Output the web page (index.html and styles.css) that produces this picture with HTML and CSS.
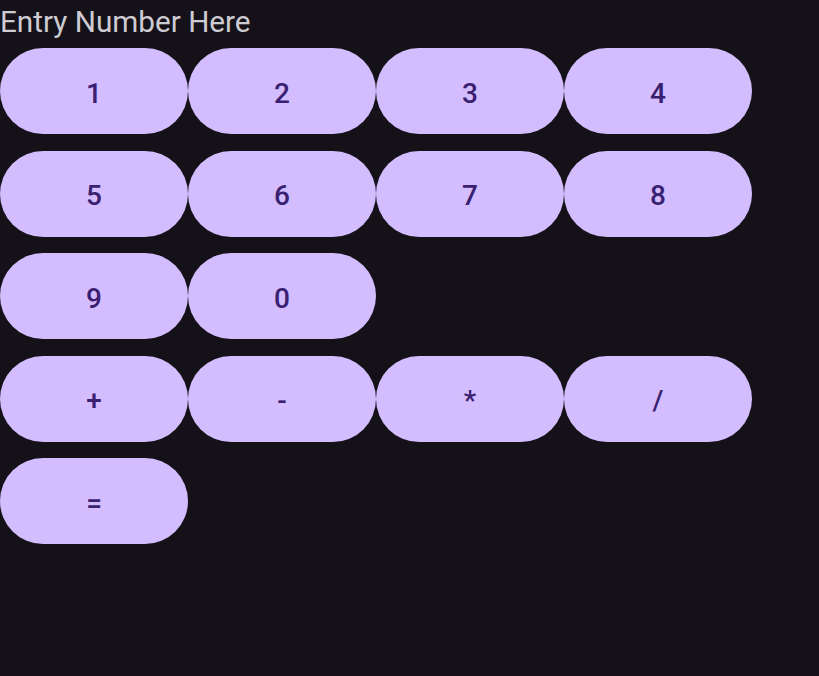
FILE: index.html
```html
<!DOCTYPE html>
<html lang="en">
<head>
    <meta charset="UTF-8">
    <meta name="viewport" content="width=device-width, initial-scale=1.0">
    <title>Calculator</title>
    <link rel="stylesheet" href="styles.css">
</head>
<body>

    <div class="entry">Entry Number Here</div>

    <div class="pad">
        <div class="pad-row">
            <button class="key">1</button>
            <button class="key">2</button>
            <button class="key">3</button>
            <button class="key">4</button>
        </div>
        <div class="pad-row">
            <button class="key">5</button>
            <button class="key">6</button>
            <button class="key">7</button>
            <button class="key">8</button>
        </div>
        <div class="pad-row">
            <button class="key">9</button>
            <button class="key">0</button>
        </div>
        <div class="pad-row">
            <button class="key">+</button>
            <button class="key">-</button>
            <button class="key">*</button>
            <button class="key">/</button>
        </div>
        <div class="pad-row">
            <button class="key">=</button>
        </div>
    </div>

</body>
</html>
```

FILE: styles.css
```css
/* Basic reset */
* {
    margin: 0;
    padding: 0;
    box-sizing: border-box;
}

body {
    font-family: Roboto, "Noto Sans", sans-serif;
    background-color: #141218;
    min-height: 100vh;
}

/* Display line */
.entry {
    color: #cfcbd3;
    font-size: 29.7px;
    line-height: 44px;
    height: 48px;
}

/* Keypad */
.pad {
    display: flex;
    flex-direction: column;
    gap: 16.5px;
}

.pad-row {
    display: flex;
}

.key {
    width: 188px;
    height: 86px;
    border: none;
    border-radius: 43px;
    background-color: #d3bdff;
    color: #3a2070;
    font-family: Roboto, "Noto Sans", sans-serif;
    font-size: 28px;
    font-weight: 500;
    padding-top: 4px;
    cursor: pointer;
}
```
